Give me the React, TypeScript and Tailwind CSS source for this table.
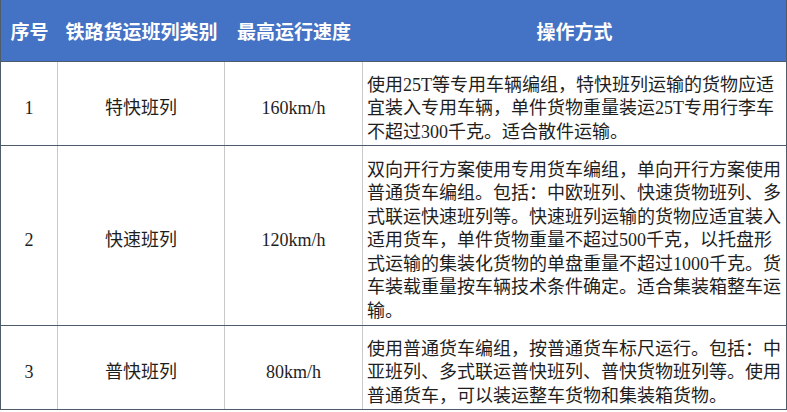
const rows = [
  {
    no: '1',
    kind: '特快班列',
    speed: '160km/h',
    text: '使用25T等专用车辆编组，特快班列运输的货物应适宜装入专用车辆，单件货物重量装运25T专用行李车不超过300千克。适合散件运输。',
    h: 'h-[84px]',
  },
  {
    no: '2',
    kind: '快速班列',
    speed: '120km/h',
    text: '双向开行方案使用专用货车编组，单向开行方案使用普通货车编组。包括：中欧班列、快速货物班列、多式联运快速班列等。快速班列运输的货物应适宜装入适用货车，单件货物重量不超过500千克，以托盘形式运输的集装化货物的单盘重量不超过1000千克。货车装载重量按车辆技术条件确定。适合集装箱整车运输。',
    h: 'h-[180px]',
  },
  {
    no: '3',
    kind: '普快班列',
    speed: '80km/h',
    text: '使用普通货车编组，按普通货车标尺运行。包括：中亚班列、多式联运普快班列、普快货物班列等。使用普通货车，可以装运整车货物和集装箱货物。',
    h: 'h-[84px]',
  },
];

export default function App() {
  return (
    <div
      className="w-[787px] h-[412px] bg-white text-[#1e1e1e] overflow-hidden"
      style={{ fontFamily: '"Liberation Serif", "Noto Sans CJK SC", serif' }}
    >
      <div className="border-x border-b border-[#4d5b6b]">
        <div className="flex h-[61px] pt-[5px] bg-[#4472c4] text-white font-bold text-[19px] items-center">
          <div className="w-[57px] text-center">序号</div>
          <div className="w-[167px] text-center">铁路货运班列类别</div>
          <div className="w-[138px] text-center">最高运行速度</div>
          <div className="flex-1 text-center">操作方式</div>
        </div>
        {rows.map((r) => (
          <div key={r.no} className={`flex border-t border-[#4d5b6b] text-[18px] ${r.h}`}>
            <div className="w-[57px] pt-[10px] flex items-center justify-center border-r border-[#c9c9c9]">{r.no}</div>
            <div className="w-[167px] pt-[10px] flex items-center justify-center border-r border-[#c9c9c9]">{r.kind}</div>
            <div className="w-[138px] pt-[10px] flex items-center justify-center border-r border-[#c9c9c9]">{r.speed}</div>
            <div className="flex-1 flex items-center pl-[4px] pt-[11px]">
              <p className="w-[418px] leading-[23.4px]">{r.text}</p>
            </div>
          </div>
        ))}
      </div>
    </div>
  );
}
